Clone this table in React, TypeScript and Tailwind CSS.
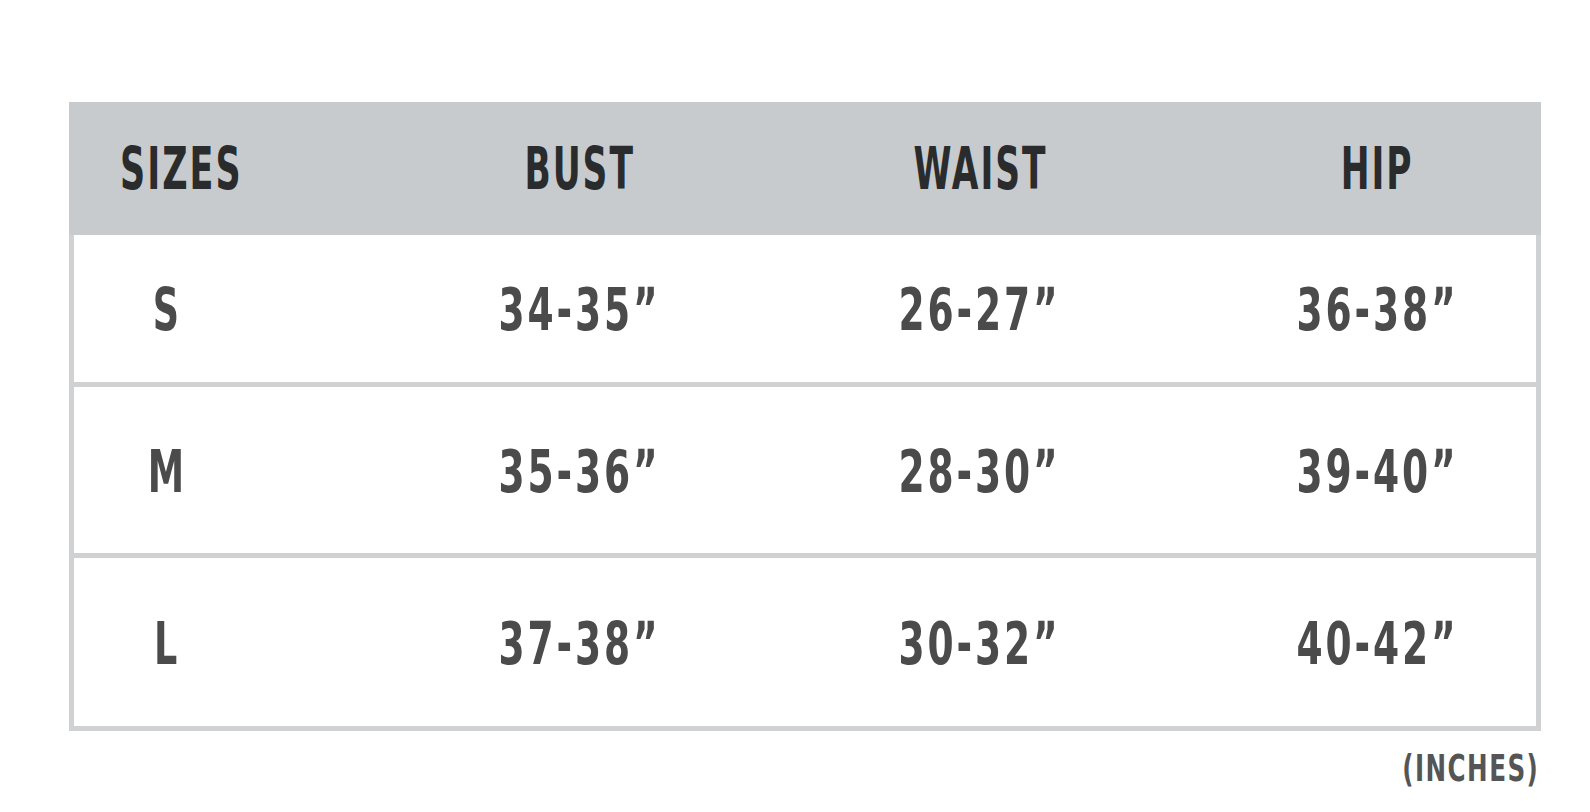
const FONT = {
  fontFamily: '"DejaVu Sans Condensed", "DejaVu Sans", sans-serif',
}

const ROWS = [
  { size: "S", bust: "34-35”", waist: "26-27”", hip: "36-38”", h: "h-[152px]" },
  { size: "M", bust: "35-36”", waist: "28-30”", hip: "39-40”", h: "h-[171px]" },
  { size: "L", bust: "37-38”", waist: "30-32”", hip: "40-42”", h: "h-[168px]" },
]

export default function App() {
  return (
    <div className="w-full h-[812px] bg-white overflow-hidden font-bold" style={FONT}>
      <div className="ml-[69px] mt-[102px] w-[1472px]">
        {/* header */}
        <div className="h-[133px] bg-[#c8cbcd] px-[5px] grid grid-cols-[306px_400px_400px_1fr] items-center text-[58px] leading-none text-[#2a2b2c]">
          <div className="pl-[46px]">
            <span className="inline-block scale-x-[0.67] origin-left tracking-[3px]">SIZES</span>
          </div>
          <div className="flex justify-center">
            <span className="inline-block scale-x-[0.66] tracking-[3px]">BUST</span>
          </div>
          <div className="flex justify-center">
            <span className="inline-block scale-x-[0.66] tracking-[3px]">WAIST</span>
          </div>
          <div className="flex justify-center pl-[39px]">
            <span className="inline-block scale-x-[0.66] tracking-[3px]">HIP</span>
          </div>
        </div>

        {/* body */}
        <div className="border-x-[5px] border-b-[5px] border-[#cfd1d2] divide-y-[5px] divide-[#cfd1d2]">
          {ROWS.map((r) => (
            <div
              key={r.size}
              className={`${r.h} pt-[3px] grid grid-cols-[306px_400px_400px_1fr] items-center text-[58px] leading-none text-[#4b4b4b]`}
            >
              <div className="w-[184px] flex justify-center">
                <span className="inline-block scale-x-[0.7]">{r.size}</span>
              </div>
              <div className="flex justify-center">
                <span className="inline-block scale-x-[0.72] tracking-[4px]">{r.bust}</span>
              </div>
              <div className="flex justify-center">
                <span className="inline-block scale-x-[0.72] tracking-[4px]">{r.waist}</span>
              </div>
              <div className="flex justify-center pl-[39px]">
                <span className="inline-block scale-x-[0.72] tracking-[4px]">{r.hip}</span>
              </div>
            </div>
          ))}
        </div>

        <div className="flex justify-end pr-[2px] mt-[18px] text-[38px] leading-none text-[#555555]">
          <span className="inline-block scale-x-[0.72] origin-right tracking-[2px]">(INCHES)</span>
        </div>
      </div>
    </div>
  )
}
